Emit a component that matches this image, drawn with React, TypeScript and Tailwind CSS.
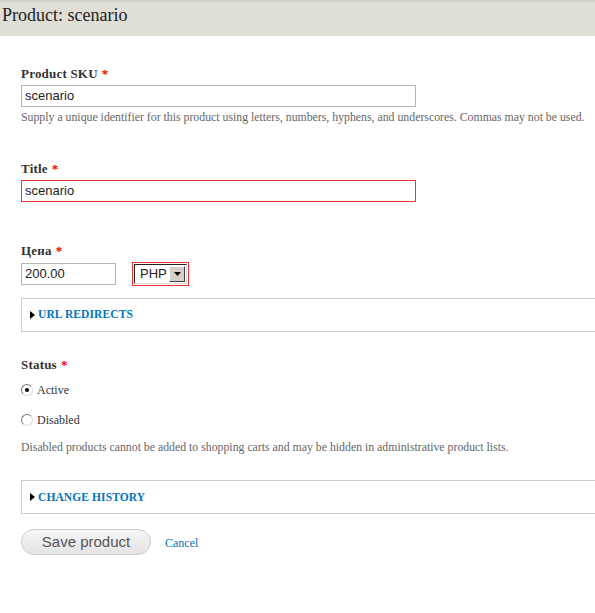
import React from "react";

const serif = "font-['Liberation_Serif','DejaVu_Serif',serif]";
const sans = "font-['Liberation_Sans',Arial,sans-serif]";

function Req() {
  return <span className="text-[#e00] ml-[4px]">*</span>;
}

function Label({ children }: { children: React.ReactNode }) {
  return (
    <div className={`${serif} text-[13px] font-bold text-[#333] leading-[16px] tracking-[0.2px]`}>
      {children}
      <Req />
    </div>
  );
}

function Arrow() {
  return (
    <svg width="5" height="8" viewBox="0 0 5 8" className="mr-[3px]">
      <path d="M0 0 L5 4 L0 8 Z" fill="#000" />
    </svg>
  );
}

function Fieldset({ title }: { title: string }) {
  return (
    <div className="ml-[21px] h-[34px] border border-r-0 border-[#ccc] flex items-center pl-[8px]">
      <Arrow />
      <span className={`${serif} text-[11.5px] font-bold text-[#0074bd] tracking-[0.1px]`}>{title}</span>
    </div>
  );
}

function Radio({ checked, label }: { checked?: boolean; label: string }) {
  return (
    <div className="flex items-center h-[14px]">
      <span className="w-[12px] h-[12px] rounded-full border border-[#777] border-r-[#ddd] border-b-[#ddd] bg-white flex items-center justify-center">
        {checked && <span className="w-[4px] h-[4px] rounded-full bg-black" />}
      </span>
      <span className={`${serif} text-[12px] text-[#333] ml-[4px]`}>{label}</span>
    </div>
  );
}

export default function App() {
  return (
    <div className="w-[595px] h-[613px] bg-white overflow-hidden">
      <div className="h-[36px] bg-[#dfdfd8] border-t-[2px] border-[#d2d2cc] flex items-center pl-[2px]">
        <span className={`${serif} text-[18px] text-[#222] leading-none mt-[-9px]`}>Product: scenario</span>
      </div>

      <div className="pt-[30px] pl-[21px]">
        <Label>Product SKU</Label>
        <div className="mt-[3px] w-[395px] h-[22px] border border-[#b5b5b5] flex items-center pl-[3px]">
          <span className={`${sans} text-[13px] text-[#222]`}>scenario</span>
        </div>
        <div className={`${serif} text-[11.8px] text-[#666] mt-[2px] whitespace-nowrap`}>
          Supply a unique identifier for this product using letters, numbers, hyphens, and underscores. Commas may not be used.
        </div>
      </div>

      <div className="pt-[34px] pl-[21px]">
        <Label>Title</Label>
        <div className="mt-[3px] w-[395px] h-[22px] border border-[#e33] flex items-center pl-[3px]">
          <span className={`${sans} text-[13px] text-[#222]`}>scenario</span>
        </div>
      </div>

      <div className="pt-[41px] pl-[21px]">
        <Label>Цена</Label>
        <div className="mt-[4px] flex items-start">
          <div className="w-[95px] h-[22px] border border-[#b5b5b5] flex items-center pl-[3px]">
            <span className={`${sans} text-[13px] text-[#222]`}>200.00</span>
          </div>
          <div className="ml-[16px] mt-[-1px] w-[57px] h-[24px] border border-[#e33] p-[1px]">
            <div className="w-full h-full border border-[#222] border-r-[#ddd] border-b-[#ddd] flex items-center pl-[5px] pr-[1px]">
              <span className={`${sans} text-[13px] text-[#222] flex-1`}>PHP</span>
              <span className="w-[16px] h-[16px] bg-[#d4d0c8] border border-[#fff] border-r-[#404040] border-b-[#404040] flex items-center justify-center">
                <svg width="7" height="4" viewBox="0 0 7 4"><path d="M0 0 H7 L3.5 4 Z" fill="#000" /></svg>
              </span>
            </div>
          </div>
        </div>
      </div>

      <div className="mt-[12px]">
        <Fieldset title="URL REDIRECTS" />
      </div>

      <div className="pt-[25px] pl-[21px]">
        <Label>Status</Label>
        <div className="mt-[10px]">
          <Radio checked label="Active" />
        </div>
        <div className="mt-[16px]">
          <Radio label="Disabled" />
        </div>
        <div className={`${serif} text-[11.8px] text-[#666] mt-[12px] whitespace-nowrap`}>
          Disabled products cannot be added to shopping carts and may be hidden in administrative product lists.
        </div>
      </div>

      <div className="mt-[24px]">
        <Fieldset title="CHANGE HISTORY" />
      </div>

      <div className="pl-[21px] mt-[15px] flex items-center">
        <button className={`w-[130px] h-[26px] rounded-full border border-[#ccc] bg-gradient-to-b from-[#f6f6f6] to-[#e4e4e4] ${sans} text-[15px] text-[#555]`}>
          Save product
        </button>
        <span className={`${serif} text-[12px] text-[#0074bd] ml-[14px] mt-[2px]`}>Cancel</span>
      </div>
    </div>
  );
}
